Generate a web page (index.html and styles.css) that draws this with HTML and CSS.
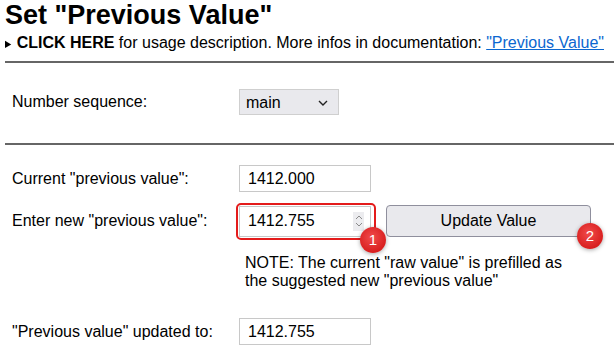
FILE: index.html
```html
<!DOCTYPE html>
<html lang="en">
<head>
    <meta charset="UTF-8">
    <title>Set "Previous Value"</title>
    <link rel="stylesheet" href="styles.css">
</head>
<body>

    <h2 class="page-title">Set "Previous Value"</h2>

    <details class="usage">
        <summary><b>CLICK HERE</b> for usage description. More infos in documentation: <a href="#">"Previous Value"</a></summary>
    </details>

    <hr class="divider">

    <!-- Sequence selection -->
    <div class="section section-seq">
        <div class="row">
            <label for="sequence">Number sequence:</label>
            <div class="select-wrap">
                <select id="sequence" class="seq-select">
                    <option>main</option>
                </select>
                <svg class="select-arrow" width="10" height="6" viewBox="0 0 10 6"><path d="M1 1l4 4 4-4" fill="none" stroke="#222" stroke-width="1.4"/></svg>
            </div>
        </div>
    </div>

    <hr class="divider">

    <!-- Value form -->
    <div class="section section-value">
        <div class="row row-current">
            <label for="current">Current "previous value":</label>
            <input type="text" id="current" class="field" value="1412.000" readonly>
        </div>

        <div class="row row-enter">
            <label for="newValue">Enter new "previous value":</label>
            <div class="highlight">
                <div class="field-wrap">
                    <input type="text" id="newValue" class="field" value="1412.755">
                    <span class="spinner">
                        <svg width="8" height="14" viewBox="0 0 8 14"><path d="M1 5l3-3 3 3M1 9l3 3 3-3" fill="none" stroke="#8a8a8a" stroke-width="1"/></svg>
                    </span>
                </div>
                <span class="badge badge-one">1</span>
            </div>
            <button type="button" class="update-btn">Update Value<span class="badge badge-two">2</span></button>
        </div>

        <p class="note">NOTE: The current "raw value" is prefilled as<br>the suggested new "previous value"</p>

        <div class="row row-updated">
            <label for="updated">"Previous value" updated to:</label>
            <input type="text" id="updated" class="field" value="1412.755" readonly>
        </div>
    </div>

</body>
</html>
```

FILE: styles.css
```css
/* General Page Styles */
body {
    font-family: "Liberation Sans", Arial, sans-serif;
    font-size: 16px;
    color: #000;
    background: #fff;
    margin: 0;
    padding: 0 0 0 5px;
    overflow: hidden;
}

.page-title {
    font-size: 27px;
    line-height: 30px;
    font-weight: 700;
    margin: 0;
}

/* Usage toggle */
.usage {
    margin-top: 4px;
    line-height: 18px;
}

.usage summary {
    cursor: pointer;
    white-space: nowrap;
}

.usage summary::marker {
    font-size: 11px;
}

.usage a {
    color: #0b67d0;
}

.divider {
    border: none;
    border-top: 2px solid #666;
    margin: 8px 0 0;
    height: 0;
}

/* Rows */
.row {
    display: flex;
    align-items: center;
}

.row label {
    width: 227px;
    padding-left: 7px;
    flex-shrink: 0;
}

.section-seq {
    padding: 26px 0 20px;
}

.section-value {
    padding-top: 20px;
}

/* Select */
.select-wrap {
    position: relative;
    display: flex;
}

.seq-select {
    appearance: none;
    -webkit-appearance: none;
    width: 100px;
    height: 26px;
    font-family: inherit;
    font-size: 16px;
    padding: 0 0 0 6px;
    border: 1px solid #cfcfcf;
    background: #e9e9ed;
    color: #000;
    border-radius: 0;
}

.select-arrow {
    position: absolute;
    right: 11px;
    top: 11px;
    pointer-events: none;
}

/* Inputs */
.field {
    width: 132px;
    height: 27px;
    box-sizing: border-box;
    font-family: inherit;
    font-size: 16px;
    padding: 0 0 0 8px;
    border: 1px solid #c8c8c8;
    background: #fff;
    color: #000;
}

.row-enter {
    margin-top: 13px;
    height: 32px;
}

.highlight {
    position: relative;
    margin-left: -3px;
    padding: 1px 3px 1px 1px;
    border: 2px solid #e41b1b;
    border-radius: 5px;
}

.field-wrap {
    position: relative;
    display: flex;
}

.field-wrap .field {
    height: 31px;
    border-color: #c8c8c8;
}

.spinner {
    position: absolute;
    right: 7px;
    top: 6px;
    width: 11px;
    height: 19px;
    background: #ececef;
    display: flex;
    align-items: center;
    justify-content: center;
}

.update-btn {
    position: relative;
    margin-left: 10px;
    width: 205px;
    height: 32px;
    font-family: inherit;
    font-size: 16px;
    color: #000;
    background: #e9e9ed;
    border: 1px solid #8f8f9d;
    border-radius: 4px;
}

/* Step badges */
.badge {
    position: absolute;
    width: 26px;
    height: 26px;
    border-radius: 50%;
    background: radial-gradient(circle at 45% 40%, #f14b4b, #d81f1f 70%, #c31515);
    box-shadow: 0 1px 4px rgba(0, 0, 0, 0.35);
    color: #fff;
    font-size: 15px;
    line-height: 26px;
    text-align: center;
}

.badge-one {
    left: 122px;
    top: 22px;
}

.badge-two {
    left: 190px;
    top: 17px;
}

.note {
    margin: 17px 0 0 240px;
    line-height: 18px;
}

.row-updated {
    margin-top: 28px;
}
```
